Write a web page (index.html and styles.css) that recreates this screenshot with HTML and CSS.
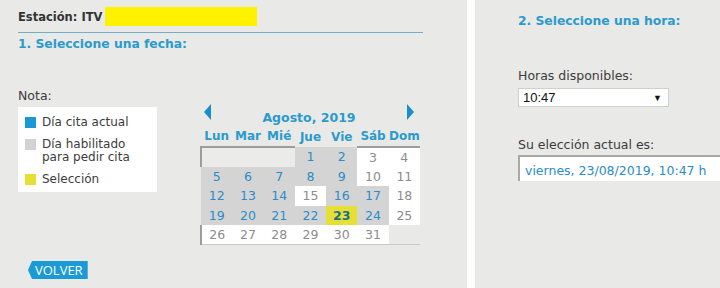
FILE: index.html
```html
<!DOCTYPE html>
<html lang="es">
<head>
    <meta charset="UTF-8">
    <meta name="viewport" content="width=device-width, initial-scale=1.0">
    <title>Cita previa ITV</title>
    <link rel="stylesheet" href="styles.css">
</head>
<body>
    <div class="page">
        <div class="panel panel-left">
            <div class="station">
                <span class="station-label">Estación: ITV</span>
                <span class="station-name"></span>
            </div>
            <h2 class="step">1. Seleccione una fecha:</h2>

            <div class="date-area">
                <div class="legend">
                    <div class="legend-title">Nota:</div>
                    <ul class="legend-box">
                        <li><span class="swatch swatch-current"></span><span>Día cita actual</span></li>
                        <li><span class="swatch swatch-enabled"></span><span>Día habilitado<br>para pedir cita</span></li>
                        <li><span class="swatch swatch-selected"></span><span>Selección</span></li>
                    </ul>
                </div>

                <div class="calendar">
                    <div class="cal-head">
                        <span class="cal-arrow cal-prev"></span>
                        <span class="cal-month">Agosto, 2019</span>
                        <span class="cal-arrow cal-next"></span>
                    </div>
                    <table class="cal-table">
                        <thead>
                            <tr>
                                <th>Lun</th><th>Mar</th><th>Mié</th><th>Jue</th><th>Vie</th><th>Sáb</th><th>Dom</th>
                            </tr>
                        </thead>
                        <tbody>
                            <tr class="first-row">
                                <td colspan="3" class="blank"></td>
                                <td class="on">1</td><td class="on">2</td><td class="off">3</td><td class="off">4</td>
                            </tr>
                            <tr>
                                <td class="on">5</td><td class="on">6</td><td class="on">7</td><td class="on">8</td><td class="on">9</td><td class="off">10</td><td class="off">11</td>
                            </tr>
                            <tr>
                                <td class="on">12</td><td class="on">13</td><td class="on">14</td><td class="off">15</td><td class="on">16</td><td class="on">17</td><td class="off">18</td>
                            </tr>
                            <tr>
                                <td class="on">19</td><td class="on">20</td><td class="on">21</td><td class="on">22</td><td class="selected">23</td><td class="on">24</td><td class="off">25</td>
                            </tr>
                            <tr class="last-row">
                                <td class="off first">26</td><td class="off">27</td><td class="off">28</td><td class="off">29</td><td class="off">30</td><td class="off">31</td><td class="empty"></td>
                            </tr>
                        </tbody>
                    </table>
                </div>
            </div>

            <a class="btn-back" href="#">VOLVER</a>
        </div>

        <div class="divider"></div>

        <div class="panel panel-right">
            <h2 class="step">2. Seleccione una hora:</h2>
            <label class="field-label" for="hora">Horas disponibles:</label>
            <div class="select">
                <span id="hora">10:47</span>
                <span class="select-arrow">▼</span>
            </div>
            <div class="field-label">Su elección actual es:</div>
            <div class="current-choice">viernes, 23/08/2019, 10:47 h</div>
        </div>
    </div>
</body>
</html>
```

FILE: styles.css
```css
* {
    box-sizing: border-box;
    margin: 0;
    padding: 0;
}

body {
    font-family: "DejaVu Sans", Verdana, sans-serif;
    font-size: 12.5px;
    color: #3c3c3c;
    background: #e9e9e7;
    width: 720px;
    height: 288px;
    overflow: hidden;
}

.page {
    display: flex;
    height: 288px;
}

.panel-left {
    flex: none;
    width: 467px;
    padding: 7px 0 0 18px;
}

.divider {
    flex: none;
    width: 8px;
    background: #fff;
}

.panel-right {
    flex: 1;
    min-width: 0;
    overflow: hidden;
    padding: 13px 0 0 43px;
    display: flex;
    flex-direction: column;
    align-items: flex-start;
}

.station {
    display: flex;
    align-items: center;
    width: 405px;
    height: 26px;
    border-bottom: 1px solid #6fb0c6;
    padding-bottom: 6px;
}

.station-label {
    font-weight: bold;
    font-size: 11.5px;
    color: #333;
}

.station-name {
    display: inline-block;
    width: 152px;
    height: 19px;
    margin-left: 3px;
    background: #fff200;
}

.step {
    font-size: 12.3px;
    font-weight: bold;
    color: #2a9bcc;
    line-height: 17px;
}

.panel-left .step {
    margin-top: 3px;
}

.date-area {
    display: flex;
    margin-top: 33px;
}

.legend-title {
    line-height: 15px;
    margin-top: 2px;
}

.legend-box {
    list-style: none;
    width: 139px;
    margin-top: 4px;
    padding: 9px 0 6px 7px;
    background: #fff;
    font-size: 12px;
}

.legend-box li {
    display: flex;
    align-items: flex-start;
    line-height: 13px;
    margin-bottom: 9px;
}

.legend-box li:last-child {
    margin-bottom: 0;
}

.swatch {
    flex: none;
    width: 11px;
    height: 11px;
    margin: 1px 6px 0 0;
}

.swatch-current {
    background: #1b97d4;
}

.swatch-enabled {
    background: #d2d2d4;
}

.swatch-selected {
    background: #e6e036;
}

.calendar {
    margin: 19px 0 0 43px;
    width: 220px;
}

.cal-head {
    display: flex;
    align-items: center;
    justify-content: space-between;
    height: 18px;
    padding: 0 6px 0 4px;
}

.cal-arrow {
    width: 0;
    height: 0;
    border-top: 8px solid transparent;
    border-bottom: 8px solid transparent;
    margin-top: -4px;
}

.cal-prev {
    border-right: 7px solid #1a8dcc;
}

.cal-next {
    border-left: 7px solid #1a8dcc;
}

.cal-month {
    font-size: 12.5px;
    font-weight: bold;
    color: #2a9bcc;
    margin-top: 6px;
}

.cal-table {
    border-collapse: collapse;
    table-layout: fixed;
    width: 220px;
    text-align: center;
}

.cal-table th {
    width: 31px;
    height: 24px;
    padding-top: 3px;
    font-size: 12px;
    font-weight: bold;
    color: #2a9bcc;
}

.cal-table td {
    height: 19.5px;
    font-size: 12.5px;
    padding: 0;
}

.cal-table .on {
    background: #d4d4d5;
    color: #2a8dc6;
}

.cal-table .off {
    background: #fff;
    color: #8c8c8c;
}

.cal-table .selected {
    background: #e6e036;
    color: #1d6f8a;
    font-weight: bold;
}

.cal-table .blank {
    background: #ebebea;
    border-top: 2px solid #9c9c9c;
    border-left: 2px solid #9c9c9c;
}

.first-row .off {
    border-top: 2px solid #9c9c9c;
}

.last-row td {
    border-bottom: 1px solid #c9c9c9;
}

.last-row .first {
    border-left: 2px solid #9c9c9c;
}

.cal-table .empty {
    background: transparent;
}

.btn-back {
    display: inline-block;
    margin: 16px 0 0 10px;
    height: 18px;
    padding: 0 5px 0 7px;
    line-height: 18px;
    background: #1a9ad6;
    color: #fff;
    font-family: "Open Sans", "Liberation Sans", sans-serif;
    font-size: 13px;
    text-decoration: none;
    clip-path: polygon(4px 0, 100% 0, 100% 100%, 4px 100%, 0 50%);
}

.field-label {
    margin-top: 38px;
    line-height: 15px;
}

.select {
    display: flex;
    justify-content: space-between;
    align-items: center;
    width: 151px;
    height: 19px;
    margin-top: 5px;
    padding: 0 6px 0 4px;
    background: #fff;
    border: 1px solid #cfcfcf;
    font-family: "Liberation Sans", Arial, sans-serif;
    font-size: 13px;
    color: #111;
}

.select-arrow {
    font-size: 9px;
}

.select + .field-label {
    margin-top: 30px;
}

.current-choice {
    width: 220px;
    height: 26px;
    margin-top: 3px;
    padding: 6px 0 0 5px;
    background: #fff;
    border-top: 2px solid #a9a9a9;
    border-left: 2px solid #a9a9a9;
    color: #2a8dc6;
    font-size: 12.5px;
    white-space: nowrap;
}
```
